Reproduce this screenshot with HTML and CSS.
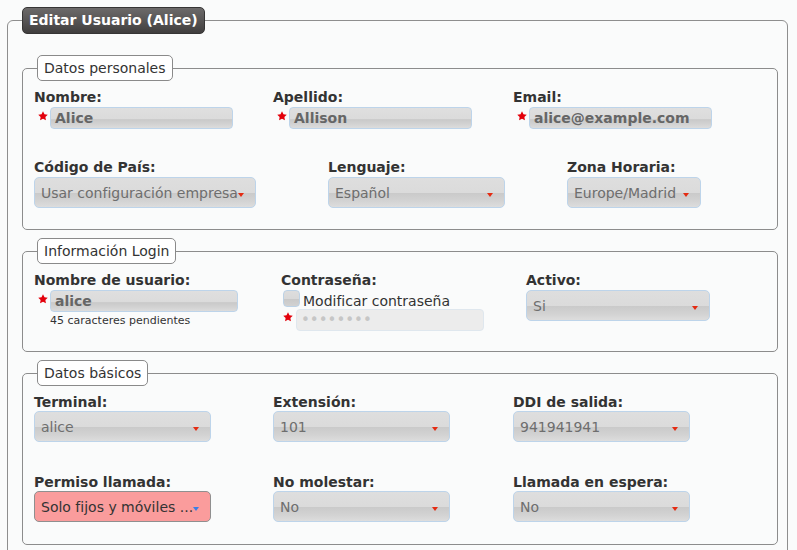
FILE: index.html
```html
<!DOCTYPE html>
<html lang="es">
<head>
<meta charset="utf-8">
<title>Editar Usuario (Alice)</title>
<link rel="stylesheet" href="styles.css">
</head>
<body>
<fieldset class="panel">
  <legend class="panel-title">Editar Usuario (Alice)</legend>

  <fieldset class="group g-personal">
    <legend class="group-title">Datos personales</legend>
    <div class="row row-first">
      <div class="field w239">
        <div class="lbl">Nombre:</div>
        <div class="req">
          <svg class="star" viewBox="0 0 10 10"><polygon points="5,0.3 6.47,3.28 9.76,3.76 7.38,6.07 7.94,9.35 5,7.8 2.06,9.35 2.62,6.07 0.24,3.76 3.53,3.28"/></svg>
          <div class="tinput w183">Alice</div>
        </div>
      </div>
      <div class="field w240">
        <div class="lbl">Apellido:</div>
        <div class="req">
          <svg class="star" viewBox="0 0 10 10"><polygon points="5,0.3 6.47,3.28 9.76,3.76 7.38,6.07 7.94,9.35 5,7.8 2.06,9.35 2.62,6.07 0.24,3.76 3.53,3.28"/></svg>
          <div class="tinput w183">Allison</div>
        </div>
      </div>
      <div class="field">
        <div class="lbl">Email:</div>
        <div class="req">
          <svg class="star" viewBox="0 0 10 10"><polygon points="5,0.3 6.47,3.28 9.76,3.76 7.38,6.07 7.94,9.35 5,7.8 2.06,9.35 2.62,6.07 0.24,3.76 3.53,3.28"/></svg>
          <div class="tinput w183">alice@example.com</div>
        </div>
      </div>
    </div>
    <div class="row">
      <div class="field w294">
        <div class="lbl">Código de País:</div>
        <div class="select w222">Usar configuración empresa<span class="caret"></span></div>
      </div>
      <div class="field w239">
        <div class="lbl">Lenguaje:</div>
        <div class="select w177">Español<span class="caret"></span></div>
      </div>
      <div class="field">
        <div class="lbl">Zona Horaria:</div>
        <div class="select w134">Europe/Madrid<span class="caret"></span></div>
      </div>
    </div>
  </fieldset>

  <fieldset class="group g-login">
    <legend class="group-title">Información Login</legend>
    <div class="row">
      <div class="field w247">
        <div class="lbl">Nombre de usuario:</div>
        <div class="req">
          <svg class="star" viewBox="0 0 10 10"><polygon points="5,0.3 6.47,3.28 9.76,3.76 7.38,6.07 7.94,9.35 5,7.8 2.06,9.35 2.62,6.07 0.24,3.76 3.53,3.28"/></svg>
          <div class="tinput w188">alice</div>
        </div>
        <div class="hint">45 caracteres pendientes</div>
      </div>
      <div class="field w245">
        <div class="lbl">Contraseña:</div>
        <div class="chkrow">
          <span class="chk"></span>
          <span class="chk-text">Modificar contraseña</span>
        </div>
        <div class="req req-pw">
          <svg class="star" viewBox="0 0 10 10"><polygon points="5,0.3 6.47,3.28 9.76,3.76 7.38,6.07 7.94,9.35 5,7.8 2.06,9.35 2.62,6.07 0.24,3.76 3.53,3.28"/></svg>
          <div class="pwinput w188">••••••••</div>
        </div>
      </div>
      <div class="field">
        <div class="lbl">Activo:</div>
        <div class="select w184">Si<span class="caret"></span></div>
      </div>
    </div>
  </fieldset>

  <fieldset class="group g-basic">
    <legend class="group-title">Datos básicos</legend>
    <div class="row row-first">
      <div class="field w239">
        <div class="lbl">Terminal:</div>
        <div class="select w177">alice<span class="caret"></span></div>
      </div>
      <div class="field w240">
        <div class="lbl">Extensión:</div>
        <div class="select w177">101<span class="caret"></span></div>
      </div>
      <div class="field">
        <div class="lbl">DDI de salida:</div>
        <div class="select w177">941941941<span class="caret"></span></div>
      </div>
    </div>
    <div class="row">
      <div class="field w239">
        <div class="lbl">Permiso llamada:</div>
        <div class="select w177 alert">Solo fijos y móviles ...<span class="caret"></span></div>
      </div>
      <div class="field w240">
        <div class="lbl">No molestar:</div>
        <div class="select w177">No<span class="caret"></span></div>
      </div>
      <div class="field">
        <div class="lbl">Llamada en espera:</div>
        <div class="select w177">No<span class="caret"></span></div>
      </div>
    </div>
  </fieldset>
</fieldset>
</body>
</html>
```

FILE: styles.css
```css
* { box-sizing: border-box; }

body {
  margin: 7px 9px 0 7px;
  background: #fafbfb;
  font-family: "DejaVu Sans", "Noto Sans", sans-serif;
  font-size: 14px;
  color: #333;
}

.panel {
  margin: 0;
  min-width: 0;
  border: 1px solid #8e8e8e;
  border-radius: 6px;
  padding: 21px 9px 20px 14px;
}

.panel-title {
  margin: 0;
  padding: 4px 6px;
  line-height: 17px;
  font-weight: bold;
  color: #fff;
  background: linear-gradient(to bottom, #6c6a6a 0%, #575555 50%, #403e3e 100%);
  border: 1px solid #363535;
  border-radius: 5px;
}

.group {
  margin: 0 0 8px 0;
  min-width: 0;
  border: 1px solid #8c8c8c;
  border-radius: 5px;
  padding: 8px 10px 21px 11px;
}

.g-login { padding-bottom: 20px; }
.g-basic { padding-bottom: 22px; }

.group-title {
  margin-left: 3px;
  padding: 3px 6px;
  line-height: 18px;
  background: #fff;
  border: 1px solid #8a8a8a;
  border-radius: 5px;
  color: #333;
}

.row {
  display: flex;
  align-items: flex-start;
}

.row-first { margin-bottom: 30px; }
.g-basic .row-first { margin-bottom: 32px; }

.field { flex: none; }

.w239 { width: 239px; }
.w240 { width: 240px; }
.w294 { width: 294px; }
.w247 { width: 247px; }
.w245 { width: 245px; }
.w222 { width: 222px; }
.w177 { width: 177px; }
.w134 { width: 134px; }
.w183 { width: 183px; }
.w184 { width: 184px; }
.w188 { width: 188px; }

.lbl {
  font-weight: bold;
  line-height: 16px;
  margin-bottom: 2px;
  color: #333;
  white-space: nowrap;
}

.g-basic .lbl { margin-bottom: 1px; }

.req {
  display: flex;
  align-items: flex-start;
}

.star {
  flex: none;
  width: 10px;
  height: 10px;
  margin: 4px 2px 0 4px;
  fill: #e3000b;
}

.req-pw .star {
  margin: 3px 3px 0 2px;
}

.tinput {
  height: 22px;
  border: 1px solid #bdd4ea;
  border-radius: 4px;
  padding: 0 4px;
  line-height: 20px;
  font-weight: bold;
  color: #666;
  white-space: nowrap;
  overflow: hidden;
  background: linear-gradient(to bottom, #dfdfdf 0%, #dbdbdb 55%, #c9c9c9 58%, #d2d2d2 80%, #dcdcdc 100%);
}

.hint {
  margin: 2px 0 0 16px;
  font-size: 11px;
  line-height: 13px;
  color: #333;
}

.chkrow {
  display: flex;
  align-items: flex-start;
  height: 17px;
  margin-left: 2px;
}

.chk {
  flex: none;
  width: 17px;
  height: 17px;
  border: 1px solid #bcd2e6;
  border-radius: 4px;
  background: linear-gradient(to bottom, #dddddd 0%, #d9d9d9 50%, #c8c8c8 53%, #d2d2d2 100%);
}

.chk-text {
  margin: 3px 0 0 3px;
  line-height: 16px;
  color: #333;
  white-space: nowrap;
}

.req-pw { margin-top: 2px; }

.pwinput {
  height: 22px;
  border: 1px solid #dfe7ee;
  border-radius: 4px;
  background: #ececec;
  padding: 0 4px;
  line-height: 20px;
  color: #c6c6c6;
  font-size: 15px;
  letter-spacing: 0;
}

.select {
  position: relative;
  height: 31px;
  border: 1px solid #bdd4ea;
  border-radius: 5px;
  padding: 0 6px;
  line-height: 30px;
  color: #6e6e6e;
  white-space: nowrap;
  overflow: hidden;
  background: linear-gradient(to bottom, #dedede 0%, #dbdbdb 50%, #cacaca 53%, #d3d3d3 80%, #dddddd 100%);
}

.caret {
  position: absolute;
  right: 11px;
  top: 15px;
  width: 0;
  height: 0;
  border-left: 3.5px solid transparent;
  border-right: 3.5px solid transparent;
  border-top: 4px solid #e42b12;
}

.select.alert {
  background: #fa9c9c;
  border-color: #8f8f8f;
  color: #333;
}

.select.alert .caret {
  border-top-color: #3a7fe6;
}
```
